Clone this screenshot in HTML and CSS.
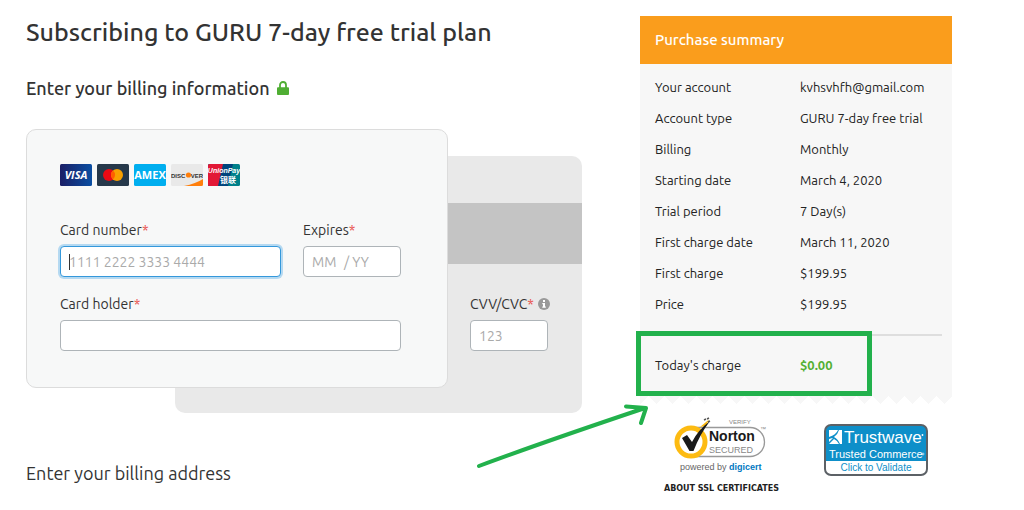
FILE: index.html
```
<!DOCTYPE html>
<html lang="en">
<head>
  <meta charset="UTF-8" />
  <title>Subscribing to GURU</title>
  <meta name="viewport" content="width=device-width, initial-scale=1.0" />
  <link rel="stylesheet" href="styles.css">
</head>
<body>
  <div class="page">
    <main class="billing">
      <h1>Subscribing to GURU 7-day free trial plan</h1>
      <h2>
        Enter your billing information
        <svg class="lock" viewBox="0 0 12 14" aria-hidden="true">
          <path d="M3 7V4a3 3 0 0 1 6 0v3" fill="none" stroke="#4fae33" stroke-width="1.8" />
          <rect x="0" y="6.3" width="12" height="7.7" rx="1" fill="#4fae33" />
        </svg>
      </h2>

      <form class="cards">
        <div class="card-back">
          <div class="stripe"></div>
          <div class="field cvv">
            <label for="cvv">CVV/CVC<span class="req">*</span>
              <svg class="info" viewBox="0 0 12 12" aria-hidden="true">
                <circle cx="6" cy="6" r="6" fill="#999" />
                <path d="M5 2h2v2H5zM4.300 5H7v3.500h.8v1.300H4.300V8.500H5V6.200h-.7z" fill="#fff" />
              </svg>
            </label>
            <input id="cvv" type="text" placeholder="123" />
          </div>
        </div>

        <div class="card-front">
          <div class="brands">
            <!-- visa -->
            <svg viewBox="0 0 32 22" role="img" aria-label="Visa">
              <defs>
                <linearGradient id="visa" x1="0" y1="0" x2="1" y2="0">
                  <stop offset="0" stop-color="#1b1f66" />
                  <stop offset="1" stop-color="#0a4ea2" />
                </linearGradient>
              </defs>
              <rect width="32" height="22" rx="1.5" fill="url(#visa)" />
              <text x="16" y="15" class="brand-visa">VISA</text>
            </svg>
            <!-- mastercard -->
            <svg viewBox="0 0 32 22" role="img" aria-label="Mastercard">
              <rect width="32" height="22" rx="1.5" fill="#26384a" />
              <circle cx="12" cy="11" r="6" fill="#eb0a14" />
              <circle cx="20" cy="11" r="6" fill="#f9a000" />
              <path d="M16 6.500a6 6 0 0 1 0 9a6 6 0 0 1 0-9z" fill="#ff5f00" />
            </svg>
            <!-- amex -->
            <svg viewBox="0 0 32 22" role="img" aria-label="American Express">
              <rect width="32" height="22" rx="1.5" fill="#00aeef" />
              <text x="16" y="14.500" class="brand-amex">AMEX</text>
            </svg>
            <!-- discover -->
            <svg viewBox="0 0 32 22" role="img" aria-label="Discover">
              <rect width="32" height="22" rx="1.5" fill="#e9e9e9" />
              <path d="M13 22Q25 19.500 32 15v5.500q0 1.500-1.500 1.500z" fill="#ff7f0c" />
              <text x="0" y="13.500" class="brand-discover">DISC</text>
              <circle cx="17.500" cy="11" r="2.600" fill="#ff7f0c" />
              <text x="32" y="13.500" class="brand-discover end">VER</text>
            </svg>
            <!-- unionpay -->
            <svg viewBox="0 0 32 22" role="img" aria-label="UnionPay">
              <rect width="32" height="22" rx="1.5" fill="#00808a" />
              <path d="M1.500 0H25l-5 22H1.500Q0 22 0 20.500v-19Q0 0 1.500 0z" fill="#00447c" />
              <path d="M1.500 0H15l-5 22H1.500Q0 22 0 20.500v-19Q0 0 1.500 0z" fill="#e21836" />
              <text x="16" y="9" class="brand-union">UnionPay</text>
              <text x="20" y="18.500" class="brand-union-cn">银联</text>
            </svg>
          </div>

          <div class="row">
            <div class="field number">
              <label for="number">Card number<span class="req">*</span></label>
              <input id="number" type="text" placeholder="1111 2222 3333 4444" autofocus />
            </div>
            <div class="field expires">
              <label for="month">Expires<span class="req">*</span></label>
              <div class="date">
                <input id="month" type="text" placeholder="MM" />
                <span>/</span>
                <input type="text" placeholder="YY" aria-label="Expiry year" />
              </div>
            </div>
          </div>
          <div class="field holder">
            <label for="holder">Card holder<span class="req">*</span></label>
            <input id="holder" type="text" />
          </div>
        </div>
      </form>

      <h2 class="address">Enter your billing address</h2>
    </main>

    <aside class="side">
      <div class="summary">
        <h3>Purchase summary</h3>
        <table>
          <tr><th scope="row">Your account</th><td>kvhsvhfh@gmail.com</td></tr>
          <tr><th scope="row">Account type</th><td>GURU 7-day free trial</td></tr>
          <tr><th scope="row">Billing</th><td>Monthly</td></tr>
          <tr><th scope="row">Starting date</th><td>March 4, 2020</td></tr>
          <tr><th scope="row">Trial period</th><td>7 Day(s)</td></tr>
          <tr><th scope="row">First charge date</th><td>March 11, 2020</td></tr>
          <tr><th scope="row">First charge</th><td>$199.95</td></tr>
          <tr><th scope="row">Price</th><td>$199.95</td></tr>
        </table>
        <div class="today">
          <span class="today-label">Today's charge</span>
          <strong>$0.00</strong>
          <div class="highlight"></div>
          <svg class="arrow" viewBox="0 0 180 70" aria-hidden="true">
            <path d="M4 63Q60 42 170 5M151 3.500L171 5L166 20" />
          </svg>
        </div>
      </div>
      <div class="zigzag"></div>

      <div class="seals">
        <div class="norton">
          <a href="#">
            <svg width="98" height="58" viewBox="0 0 98 58" role="img" aria-label="Norton Secured, powered by digicert">
              <text x="56" y="7" class="verify">VERIFY</text>
              <path d="M20 10.500H77a14.500 14.500 0 0 1 0 29H20" fill="#fff" stroke="#999" stroke-width="1.300" />
              <circle cx="18" cy="25" r="14" fill="#fff" stroke="#fdbb12" stroke-width="5" />
              <path d="M27 10L36 2.500L33 9z" fill="#fdbb12" />
              <path d="M9 21l5-3 5 7Q25 13 37 4Q27 17 20.500 34h-4z" fill="#1a1a1a" />
              <path d="M31 3l2-1M34 2l2-1M35 5l2-1" stroke="#555" stroke-width="1.500" />
              <text x="36" y="24" class="norton-name">Norton</text>
              <text x="36" y="36" class="norton-secured">SECURED</text>
              <text x="87" y="14" class="tm">™</text>
              <text x="7" y="53" class="powered">powered by <tspan class="digicert">digicert</tspan></text>
            </svg>
          </a>
          <a class="ssl" href="#">ABOUT SSL CERTIFICATES</a>
        </div>
        <a class="trustwave" href="#">
          <svg width="104" height="52" viewBox="0 0 104 52" role="img" aria-label="Trustwave Trusted Commerce, click to validate">
            <rect x="1" y="1" width="102" height="50" rx="6" fill="#fff" />
            <path d="M1 37V7a6 6 0 0 1 6-6h90a6 6 0 0 1 6 6v30z" fill="#0e8fc9" />
            <rect x="1" y="1" width="102" height="50" rx="6" fill="none" stroke="#5c6166" stroke-width="2" />
            <path d="M5 6h9Q12 11 5 13zM15 6h3v14h-2Q14 15 10 13Q14 10 15 6zM5 15q3-1 4-1L5 18zM5 20l5-5q4 2 5 5z" fill="#fff" />
            <text x="20" y="19" class="tw-name">Trustwave</text>
            <circle cx="98.500" cy="11" r=".9" fill="#fff" />
            <text x="5" y="34" class="tw-sub">Trusted Commerce</text>
            <circle cx="99" cy="30" r="1" fill="none" stroke="#fff" stroke-width=".6" />
            <text x="52" y="47" class="tw-click">Click to Validate</text>
          </svg>
        </a>
      </div>
    </aside>
  </div>
</body>
</html>
```

FILE: styles.css
```
* {
  box-sizing: border-box;
}
body {
  margin: 0;
  background: #fff;
  color: #333;
  font-family: Ubuntu, "Noto Sans", "Open Sans", sans-serif;
  font-size: 14px;
  line-height: 20px;
}
.page {
  display: grid;
  grid-template-columns: minmax(0, 1fr) 312px;
  column-gap: 58px;
  padding: 16px 72px 0 26px;
}

h1 {
  margin: 0 0 28px;
  font-size: 25px;
  line-height: 32px;
  font-weight: 500;
}
h2 {
  margin: 0 0 29px;
  font-size: 18px;
  line-height: 24px;
  font-weight: 500;
}
.lock {
  width: 12px;
  height: 14px;
  margin-left: 3px;
  vertical-align: 0;
}
.address {
  margin: 48px 0 0;
  font-weight: 400;
}

/* cards */
.cards {
  display: grid;
  grid-template-columns: 149fr 273fr 134fr;
}
.card-back {
  grid-column: 2 / 4;
  grid-row: 1;
  margin-top: 27px;
  padding-top: 47px;
  background: #e9e9e9;
  border-radius: 10px;
}
.stripe {
  height: 61px;
  background: #c4c4c4;
}
.cvv {
  width: 78px;
  margin: 30px 34px 0 auto;
}
.card-front {
  grid-column: 1 / 3;
  grid-row: 1;
  z-index: 1;
  margin-bottom: 25px;
  padding: 34px 46px 36px 33px;
  background: #f7f8f8;
  border: 1px solid #dcdcdc;
  border-radius: 10px;
}
.brands {
  display: flex;
  gap: 5px;
  margin-bottom: 34px;
}
.brands svg {
  width: 32px;
  height: 22px;
}
.row {
  display: flex;
  gap: 22px;
  margin-bottom: 17px;
}
.number {
  flex: 1;
}
.expires {
  width: 98px;
}
.field label {
  display: block;
  margin-bottom: 6px;
  white-space: nowrap;
}
.req {
  color: #e9534f;
}
.info {
  width: 12px;
  height: 12px;
  margin-left: 1px;
  vertical-align: -1px;
}
input {
  min-width: 0;
  font: inherit;
  color: #333;
}
input::placeholder {
  color: #aaa;
  opacity: 1;
}
.field > input,
.date {
  display: block;
  width: 100%;
  height: 31px;
  padding: 0 8px;
  background: #fff;
  border: 1px solid #aeb4b8;
  border-radius: 4px;
}
.field > input:focus {
  outline: none;
  border-color: #3498db;
  box-shadow: 0 0 0 2px #b5d9f1;
}
/* steady text cursor while the field is empty */
.field > input:focus:placeholder-shown {
  background: linear-gradient(#333, #333) 8px center / 1px 16px no-repeat #fff;
  caret-color: transparent;
}
.date {
  display: flex;
  align-items: center;
  color: #aaa;
}
.date input {
  width: 32px;
  padding: 0;
  background: none;
  border: 0;
  outline: none;
}
.date span {
  margin-right: 3px;
}

/* summary */
.summary {
  background: #f7f7f7;
  color: #222;
  font-size: 13px;
}
h3 {
  margin: 0;
  padding: 12px 15px;
  background: #fa9d1c;
  color: #fff;
  font-size: 15px;
  line-height: 24px;
  font-weight: 500;
}
table {
  width: 100%;
  padding: 7px 0 15px 15px;
  border-spacing: 0;
}
th, td {
  height: 31px;
  padding: 0;
  text-align: left;
  font-weight: 400;
}
th {
  width: 145px;
}
.today {
  position: relative;
  display: flex;
  align-items: center;
  height: 62px;
  margin: 0 10px;
  padding: 0 0 2px 5px;
  border-top: 2px solid #dedede;
}
.today-label {
  width: 145px;
}
.today strong {
  color: #54b033;
}
.highlight {
  position: absolute;
  left: -14px;
  top: -5px;
  width: 236px;
  height: 65px;
  border: 5px solid #22b14c;
}
.arrow {
  position: absolute;
  left: -175px;
  top: 67px;
  width: 180px;
  height: 70px;
}
.arrow path {
  fill: none;
  stroke: #22b14c;
  stroke-width: 4;
  stroke-linecap: round;
  stroke-linejoin: round;
}
.zigzag {
  height: 8px;
  background:
    linear-gradient(45deg, transparent 75%, #f7f7f7 75%) 0 0 / 16px 16px,
    linear-gradient(-45deg, transparent 75%, #f7f7f7 75%) 0 0 / 16px 16px;
}

/* seals */
.seals {
  display: flex;
  justify-content: space-between;
  padding: 13px 24px 0;
}
.norton {
  display: flex;
  flex-direction: column;
}
.norton svg {
  display: block;
  margin-left: 9px;
}
.ssl {
  margin-top: 6px;
  color: #222;
  font: bold 8px/16px "DejaVu Sans", Verdana, sans-serif;
  text-decoration: none;
}
.trustwave {
  padding-top: 7px;
}

.brand-visa,
.brand-amex {
  fill: #fff;
  font: bold 11px "Open Sans", sans-serif;
  text-anchor: middle;
}
.brand-visa {
  font-style: italic;
}
.brand-discover {
  fill: #333;
  font: bold 6px "Liberation Sans", Arial, sans-serif;
}
.end {
  text-anchor: end;
}
.brand-union {
  fill: #fff;
  font: italic bold 7px "Liberation Sans", Arial, sans-serif;
  text-anchor: middle;
}
.brand-union-cn {
  fill: #fff;
  font: bold 8px "Noto Sans CJK SC", sans-serif;
  text-anchor: middle;
}
.verify,
.tm {
  fill: #888;
  font: 6px "Liberation Sans", Arial, sans-serif;
}
.norton-name {
  fill: #1a1a1a;
  font: bold 14px "Liberation Sans", Arial, sans-serif;
}
.norton-secured {
  fill: #888;
  font: 9px "Liberation Sans", Arial, sans-serif;
}
.powered {
  fill: #666;
  font: 9px "Liberation Sans", Arial, sans-serif;
}
.digicert {
  fill: #0078c1;
  font-weight: bold;
}
.tw-name,
.tw-sub {
  fill: #fff;
  font: 17px "Liberation Sans", Arial, sans-serif;
}
.tw-sub {
  font-size: 11px;
}
.tw-click {
  fill: #0e8fc9;
  font: 10px "Liberation Sans", Arial, sans-serif;
  text-anchor: middle;
}
```
